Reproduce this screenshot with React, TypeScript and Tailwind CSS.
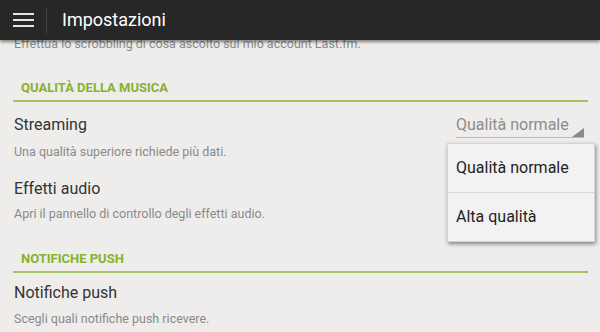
const font = { fontFamily: 'Roboto, "Noto Sans", sans-serif' }

function SectionHeader({ title }: { title: string }) {
  return (
    <div className="ml-[13px] mr-[12px] pl-2 pb-1 border-b-2 border-[#a2c35e]">
      <p className="text-[13px] leading-4 font-bold text-[#86b22d] uppercase">{title}</p>
    </div>
  )
}

export default function App() {
  return (
    <div className="relative w-[600px] h-[332px] overflow-hidden bg-[#eeedeb]" style={font}>
      <div className="relative z-10 h-10 bg-[#272727] flex items-center shadow-[0_2px_3px_rgba(0,0,0,0.45)]">
        <div className="w-[46px] flex justify-center">
          <svg width="21" height="15" viewBox="0 0 21 15">
            <rect x="0" y="0" width="21" height="2" fill="#e6e6e6" />
            <rect x="0" y="6" width="21" height="2" fill="#e6e6e6" />
            <rect x="0" y="12" width="21" height="2" fill="#e6e6e6" />
          </svg>
        </div>
        <div className="w-px h-[27px] bg-[#3f3f3f]" />
        <h1 className="ml-[15px] text-[18px] text-white leading-6">Impostazioni</h1>
      </div>

      <div className="-mt-1">
        <p className="pl-[14px] text-[12.5px] leading-4 text-[#8a8a8a]">
          Effettua lo scrobbling di cosa ascolto sul mio account Last.fm.
        </p>

        <div className="mt-7">
          <SectionHeader title="Qualità della musica" />
        </div>

        <div className="mt-[13px] flex items-start justify-between pl-[14px] pr-[16px]">
          <p className="text-[16px] leading-5 text-[#333333]">Streaming</p>
          <div className="relative pb-[2px] border-b border-[#b9b9b9] w-[128px]">
            <p className="text-[16px] leading-5 text-[#8c8c8c]">Qualità normale</p>
            <svg width="12" height="9" viewBox="0 0 12 9" className="absolute right-0 bottom-0">
              <polygon points="12,0 12,9 0,9" fill="#8a8a8a" />
            </svg>
          </div>
        </div>
        <p className="mt-[6px] pl-[14px] text-[12.5px] leading-4 text-[#8a8a8a]">
          Una qualità superiore richiede più dati.
        </p>

        <p className="mt-[19px] pl-[14px] text-[16px] leading-5 text-[#333333]">Effetti audio</p>
        <p className="mt-[7px] pl-[14px] text-[12.5px] leading-4 text-[#8a8a8a]">
          Apri il pannello di controllo degli effetti audio.
        </p>

        <div className="mt-[29px]">
          <SectionHeader title="Notifiche push" />
        </div>

        <p className="mt-[10px] pl-[14px] text-[16px] leading-5 text-[#333333]">Notifiche push</p>
        <p className="mt-2 pl-[14px] text-[12.5px] leading-4 text-[#8a8a8a]">
          Scegli quali notifiche push ricevere.
        </p>
      </div>

      <div className="absolute left-[447px] top-[143px] w-[148px] bg-[#f2f2f2] border border-[#d4d4d4] shadow-[1px_2px_4px_rgba(0,0,0,0.45)]">
        <div className="h-[49px] flex items-center pl-2 border-b border-[#d6d6d6]">
          <span className="text-[16px] text-[#222222]">Qualità normale</span>
        </div>
        <div className="h-[48px] flex items-center pl-2">
          <span className="text-[16px] text-[#222222]">Alta qualità</span>
        </div>
      </div>
    </div>
  )
}
